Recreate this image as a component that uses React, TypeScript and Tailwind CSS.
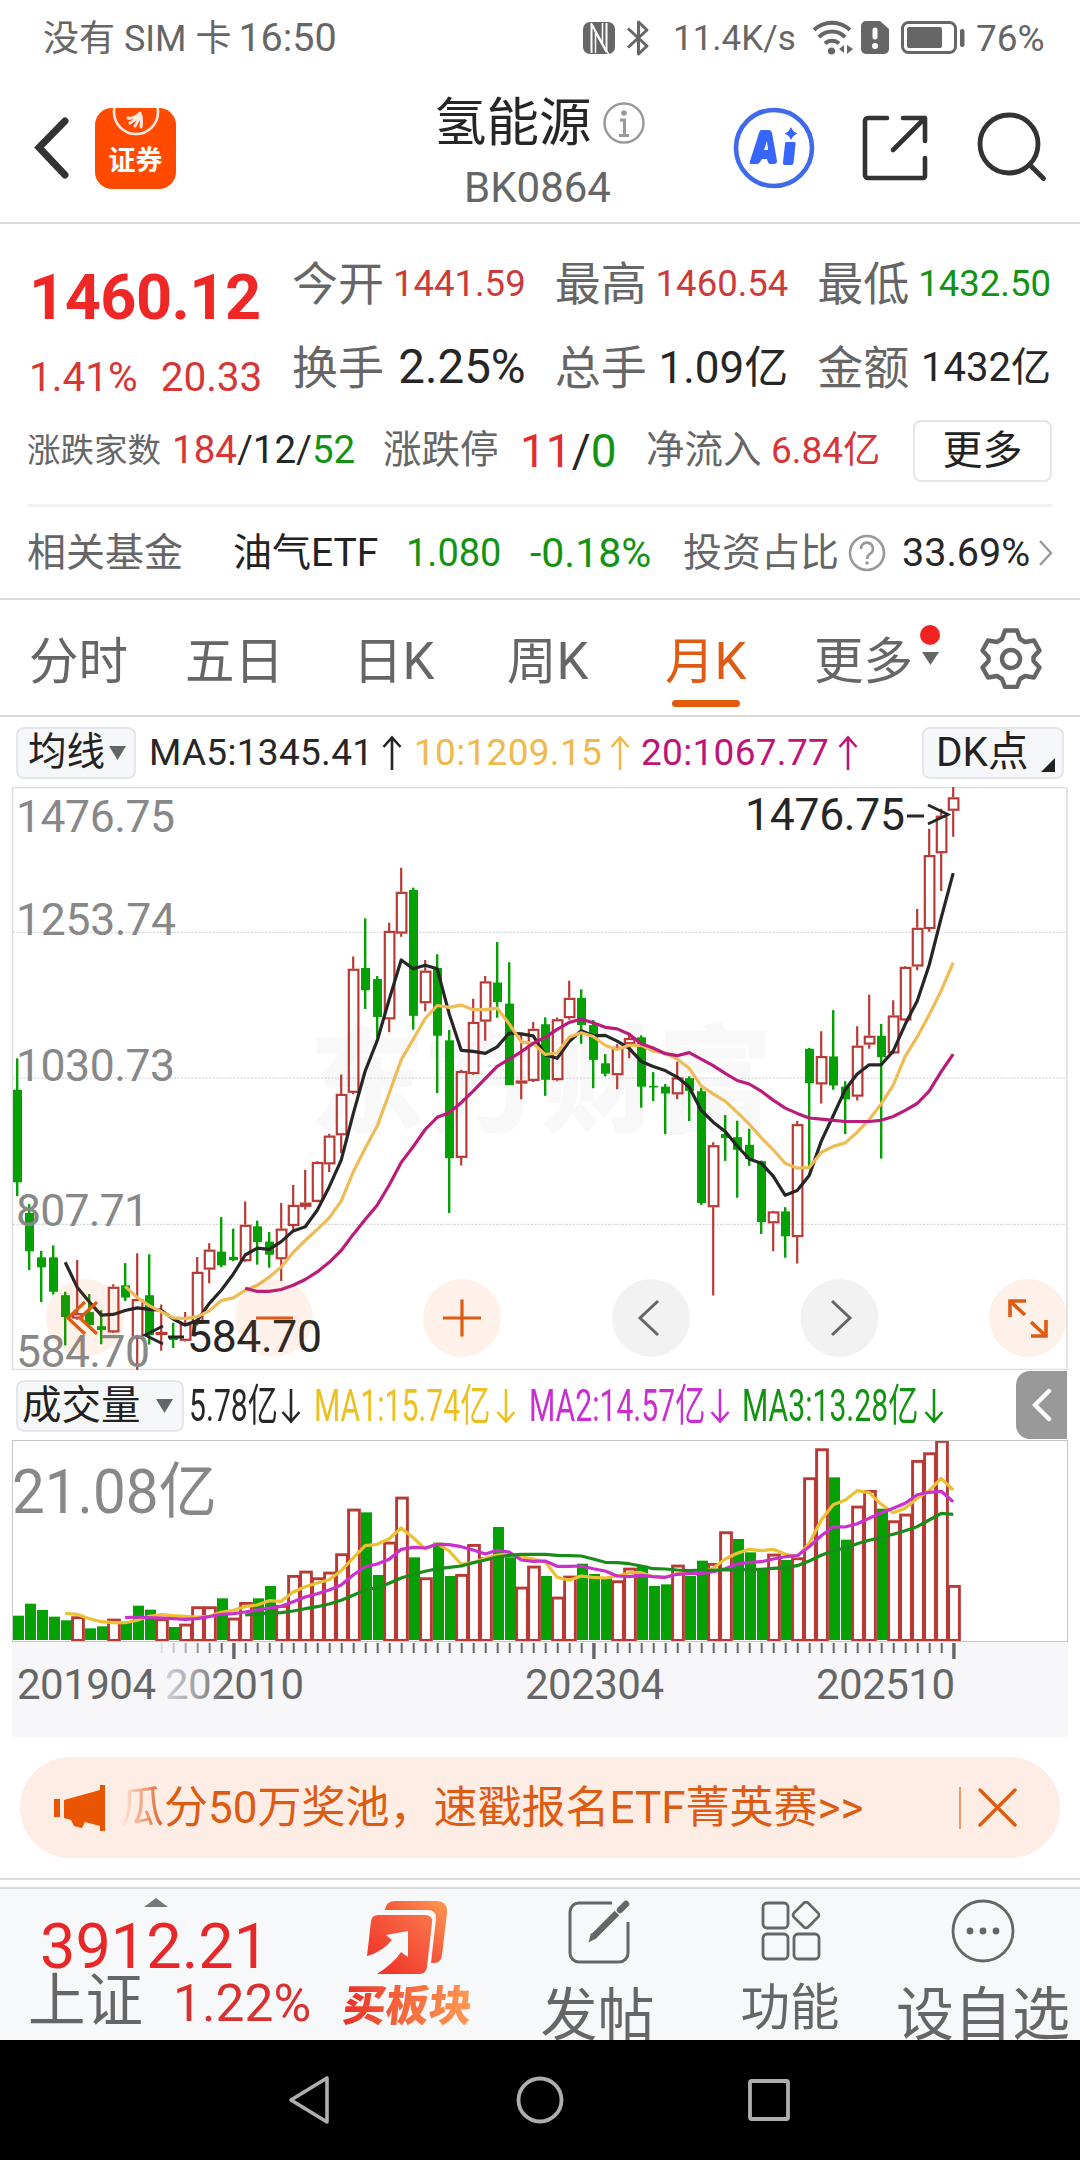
import type { ReactNode } from 'react';

type Candle = [high: number, top: number, bottom: number, low: number, up: 0 | 1];

// Price canvas units, one entry per month from 2019-04 to 2025-10
const CANDLES: Candle[] = [
  [727, 809, 1051, 1087, 0], [1108, 1131, 1231, 1280, 0], [1230, 1247, 1273, 1364, 0], [1216, 1247, 1337, 1344, 0],
  [1337, 1346, 1403, 1477, 0], [1254, 1393, 1407, 1410, 1], [1343, 1390, 1424, 1424, 0], [1385, 1427, 1437, 1474, 0],
  [1317, 1324, 1443, 1445, 1], [1262, 1320, 1352, 1361, 0], [1236, 1356, 1460, 1542, 1], [1239, 1346, 1450, 1475, 0],
  [1370, 1442, 1450, 1491, 1], [1418, 1455, 1463, 1484, 0], [1390, 1420, 1465, 1467, 1], [1246, 1285, 1421, 1425, 1],
  [1210, 1227, 1279, 1315, 1], [1142, 1232, 1268, 1273, 0], [1172, 1246, 1254, 1257, 0], [1101, 1162, 1257, 1259, 1],
  [1151, 1166, 1207, 1266, 0], [1181, 1206, 1240, 1274, 0], [1105, 1172, 1252, 1309, 1], [1058, 1110, 1165, 1178, 1],
  [1018, 1104, 1115, 1122, 1], [996, 998, 1102, 1103, 1], [924, 929, 1004, 1024, 1], [769, 820, 928, 975, 1],
  [461, 493, 817, 821, 1], [361, 491, 549, 598, 0], [512, 520, 619, 672, 0], [373, 394, 625, 659, 1],
  [229, 292, 401, 409, 1], [281, 287, 616, 652, 0], [470, 498, 583, 604, 1], [455, 491, 668, 818, 0],
  [653, 680, 988, 1131, 0], [757, 760, 987, 1007, 1], [571, 632, 768, 770, 1], [512, 526, 631, 681, 1],
  [423, 529, 580, 621, 0], [476, 584, 797, 797, 0], [664, 785, 793, 834, 1], [632, 650, 786, 789, 1],
  [620, 638, 783, 825, 0], [620, 625, 784, 787, 1], [524, 569, 622, 626, 1], [547, 569, 640, 689, 0],
  [627, 640, 731, 805, 0], [716, 740, 767, 774, 0], [690, 697, 771, 808, 1], [660, 674, 690, 727, 1],
  [667, 672, 801, 856, 0], [763, 799, 803, 839, 0], [794, 801, 819, 925, 0], [736, 777, 821, 834, 1],
  [774, 779, 812, 891, 0], [804, 813, 1105, 1110, 0], [946, 954, 1116, 1347, 1], [875, 925, 935, 995, 0],
  [890, 933, 966, 1091, 0], [911, 953, 990, 1008, 0], [994, 996, 1155, 1186, 0], [1125, 1127, 1158, 1231, 1],
  [1116, 1127, 1192, 1248, 0], [891, 899, 1194, 1263, 1], [700, 702, 792, 1012, 0], [656, 721, 795, 845, 1],
  [601, 722, 798, 809, 0], [787, 801, 834, 925, 0], [643, 694, 827, 837, 1], [561, 668, 691, 702, 1],
  [637, 668, 724, 989, 0], [575, 615, 714, 716, 1], [486, 488, 628, 630, 1], [337, 386, 487, 497, 1],
  [127, 196, 389, 396, 1], [75, 93, 191, 290, 1], [18, 45, 80, 148, 1],
];

const MA5 = [
  1260, 1325, 1363, 1398, 1396, 1386, 1379, 1383, 1385, 1408, 1424, 1412, 1368, 1333, 1291, 1241, 1223, 1226, 1206,
  1178, 1167, 1124, 1063, 993, 872, 760, 681, 573, 470, 493, 484, 493, 611, 706, 709, 714, 697, 661, 663, 668, 718,
  727, 683, 655, 668, 667, 682, 701, 735, 748, 759, 776, 802, 863, 894, 918, 956, 990, 1001, 1035, 1085, 1072, 1033,
  944, 877, 809, 768, 744, 744, 708, 638, 577, 483, 360, 243,
];
const MA10 = [
  1323, 1352, 1373, 1389, 1405, 1407, 1402, 1387, 1360, 1353, 1333, 1320, 1299, 1272, 1234, 1203, 1174, 1144, 1100,
  1024, 962, 904, 818, 731, 677, 623, 589, 594, 588, 600, 600, 596, 637, 684, 688, 717, 713, 672, 660, 670, 693, 704,
  693, 693, 708, 713, 729, 753, 799, 820, 839, 868, 899, 934, 966, 1001, 1014, 1012, 973, 957, 948, 920, 887, 846,
  797, 722, 671, 613, 550, 477,
];
const MA20 = [
  1328, 1336, 1336, 1331, 1320, 1305, 1285, 1260, 1229, 1187, 1148, 1111, 1058, 999, 958, 913, 881, 869, 843, 813,
  780, 748, 729, 710, 688, 672, 651, 633, 625, 634, 646, 650, 664, 689, 700, 715, 720, 712, 729, 746, 766, 785, 794,
  813, 836, 857, 871, 883, 886, 889, 892, 892, 892, 889, 879, 863, 845, 813, 762, 716,
];

// Volume canvas units: top edge of every bar, negative when the bar is green
const VOLUMES = [
  -767, -731, -750, -770, -781, 769, -805, -799, 776, -786, -737, -749, 775, -801, 791, 739, 739, -715, 773, 726,
  -715, -678, 735, 645, 632, 652, 635, 580, 446, -457, -645, 545, 410, -592, 652, -548, -648, 642, 552, 592, -501,
  -592, 680, 617, -648, 710, 647, -611, -642, -655, 661, 623, -617, -678, -673, 614, -648, -602, 609, 514, -537,
  -577, -625, 581, -600, 592, 352, 265, -352, -539, 437, 390, -446, 481, 461, 300, 277, 240, 675,
];
const VMA1 = [
  760, 763, 776, 785, 788, 788, 781, 769, 764, 767, 769, 771, 769, 757, 751, 740, 735, 722, 724, 696, 680, 669, 659,
  632, 594, 557, 553, 536, 504, 533, 567, 551, 573, 613, 608, 595, 585, 582, 590, 597, 606, 652, 661, 648, 652, 654,
  648, 638, 638, 650, 652, 641, 640, 640, 625, 597, 580, 568, 572, 568, 582, 590, 550, 480, 434, 420, 392, 398, 433,
  458, 445, 415, 392, 355, 390,
];
const VMA2 = [
  773, 771, 773, 774, 776, 778, 776, 770, 763, 761, 756, 750, 744, 739, 725, 711, 701, 690, 675, 645, 620, 612, 598,
  568, 562, 564, 553, 554, 560, 570, 582, 571, 576, 600, 604, 603, 619, 619, 618, 626, 633, 648, 650, 646, 650, 652,
  643, 641, 640, 635, 626, 612, 607, 605, 597, 590, 587, 560, 527, 500, 501, 491, 475, 458, 445, 430, 404, 397, 394,
  425,
];
const VMA3 = [
  765, 762, 759, 758, 753, 746, 740, 732, 721, 706, 690, 683, 670, 654, 643, 634, 626, 622, 618, 608, 600, 591, 586,
  583, 583, 583, 586, 587, 588, 597, 607, 608, 611, 618, 626, 627, 630, 632, 630, 631, 629, 630, 628, 628, 625, 623,
  617, 603, 586, 572, 564, 551, 541, 532, 523, 512, 500, 480, 460, 463,
];

const RED = '#b93a35';
const GREEN = '#04a004';

const px = (i: number) => 17.2 + 12 * i;
const py = (v: number) => (v - 18) / 2.613;
const vy = (v: number) => (v - 240) / 3;

function linePoints(data: number[], y: (v: number) => number) {
  const first = 79 - data.length;
  return data.map((v, i) => `${px(first + i)},${y(v).toFixed(1)}`).join(' ');
}

function StatusBar() {
  return (
    <div className="flex h-[75px] items-center pl-[43px] pt-px leading-none text-[#666]">
      <span className="w-[540px] whitespace-nowrap text-[36px]">没有 SIM 卡 <span className="-ml-0.5 text-[39.500px]">16:50</span></span>
      <svg width="32" height="34" viewBox="0 0 32 34" className="shrink-0">
        <rect y="1" width="32" height="32" rx="7" fill="#666" />
        <path d="M8.500 32V3L23.500 31V2" fill="none" stroke="#fff" strokeWidth="2" />
        <path d="M12.500 32V12l13 21M19.500 2v20L8 2" fill="none" stroke="#fff" strokeWidth="1.500" />
      </svg>
      <svg width="24" height="38" viewBox="0 0 24 38" className="ml-[11px] shrink-0" fill="none" stroke="#666" strokeWidth="3">
        <path d="M2 9.500L21 27l-8.500 8V3L21 11 2 28.500" strokeLinejoin="round" />
      </svg>
      <span className="ml-[23px] w-[141px] text-[35px]">11.4K/s</span>
      <svg width="42" height="36" viewBox="0 0 42 36" className="-ml-0.5 shrink-0">
        <g fill="none" stroke="#666" strokeWidth="4">
          <path d="M2 10a26 26 0 0 1 36 0" />
          <path d="M7 17a18 18 0 0 1 26 0" />
          <path d="M13 23.500a10 10 0 0 1 14 0" />
        </g>
        <circle cx="19.500" cy="31" r="3.600" fill="#666" />
        <path d="M32 25v8l-5-4zM35 25v9l6-5z" fill="#666" />
      </svg>
      <svg width="28" height="34" viewBox="0 0 28 34" className="ml-[7px] shrink-0">
        <path d="M5 0h14l9 8v20a5 5 0 0 1-5 5H5a5 5 0 0 1-5-5V5a5 5 0 0 1 5-5z" fill="#666" />
        <path d="M14 9v7" stroke="#fff" strokeWidth="5" strokeLinecap="round" />
        <circle cx="14" cy="25" r="3" fill="#fff" />
      </svg>
      <svg width="64" height="34" viewBox="0 0 64 34" className="ml-3 shrink-0">
        <rect x="1.500" y="1.500" width="53" height="30" rx="6" fill="none" stroke="#666" strokeWidth="3" />
        <rect x="6" y="6" width="35" height="21" rx="2" fill="#666" />
        <rect x="59" y="8" width="4.500" height="18" rx="2" fill="#666" />
      </svg>
      <span className="ml-[11px] text-[37px]">76%</span>
    </div>
  );
}

function Header() {
  return (
    <header className="flex h-[149px] items-start border-b-2 border-[#d8d9db]">
      <svg width="36" height="64" viewBox="0 0 36 64" className="ml-[33px] mt-[41px] shrink-0">
        <path d="M32 5L6 31.500 32 59" fill="none" stroke="#333" strokeWidth="7" strokeLinecap="round" />
      </svg>
      <div className="relative ml-[26px] mt-[33px] h-[81px] w-[81px] shrink-0 overflow-hidden rounded-[17px] bg-[#ff4a00]">
        <svg width="81" height="40" viewBox="0 0 81 40">
          <circle cx="41" cy="4" r="22" fill="none" stroke="#ffe9de" strokeWidth="2.600" />
          <g fill="none" stroke="#ffe9de" strokeWidth="3" strokeLinecap="round">
            <path d="M33 10q6 1 12-5M35 15q6-3 10-9M40 18q4-6 5-11M46 19q1-7 0-11" />
          </g>
        </svg>
        <div className="-mt-1 text-center text-[27px] font-bold leading-[34px] text-white">证券</div>
      </div>
      <div className="ml-[258px] mt-[17px] w-[260px]">
        <div className="flex items-center">
          <span className="text-[52.500px] leading-[62px] text-[#262626]">氢能源</span>
          <svg width="42" height="42" viewBox="0 0 42 42" className="ml-[11px]" fill="none" stroke="#999" strokeWidth="2.400">
            <circle cx="21" cy="21" r="19.500" />
            <path d="M17 18h4.500v15M16 33.500h10" strokeWidth="3" />
            <circle cx="21" cy="11" r="2.800" fill="#999" stroke="none" />
          </svg>
        </div>
        <div className="ml-[30px] text-[42px] leading-[68px] text-[#666]">BK0864</div>
      </div>
      <svg width="82" height="82" viewBox="0 0 82 82" className="ml-[39px] mt-[32px] shrink-0">
        <circle cx="41" cy="41" r="38" fill="none" stroke="#4069ec" strokeWidth="4.600" />
        <path
          fillRule="evenodd"
          d="M28 23h8q2 0 3 3l5 28q0 3-3 3h-4q-2 0-3-5h-5l-2 3q-1 2-3 2h-6q-2 0-1-3l9-28q1-3 2-3zM31 43h4l-1-9z"
          fill="#3766fb"
        />
        <path d="M53 35h8q2 0 1.500 2l-2 19q0 2-2.500 2h-6q-2.500 0-2-3l2-18q0-2 1-2zM58 20q2 5 6.500 6.500Q60 28 58 33q-2-5-6.500-6.500Q56 25 58 20z" fill="#3766fb" />
      </svg>
      <svg width="68" height="68" viewBox="0 0 68 68" className="ml-[46px] mt-[39px] shrink-0" fill="none" stroke="#333" strokeWidth="4.600" strokeLinecap="round" strokeLinejoin="round">
        <path d="M26 4H7a3 3 0 0 0-3 3v54a3 3 0 0 0 3 3h55a2 2 0 0 0 2-2V44" />
        <path d="M42 4h22v23M64 4L32 36" />
      </svg>
      <svg width="72" height="72" viewBox="0 0 72 72" className="ml-[48px] mt-[37px] shrink-0" fill="none" stroke="#333" strokeWidth="4.800">
        <circle cx="32" cy="32" r="29" />
        <path d="M53 53l13.500 13.500" strokeLinecap="round" />
      </svg>
    </header>
  );
}

function Stat({ label, children, className }: { label: string; children: ReactNode; className: string }) {
  return (
    <div className="flex items-center justify-between whitespace-nowrap">
      <span className="text-[46px] text-[#666]">{label}</span>
      <span className={className}>{children}</span>
    </div>
  );
}

function Quote() {
  return (
    <section className="h-[376px] border-b-2 border-[#d8d9db] leading-none">
      <div className="flex h-[181px] pl-[29px] pt-[18px]">
        <div className="w-[263px]">
          <div className="mt-[24px] text-[63px] font-bold tracking-[-0.500px] text-[#f02727]">1460.12</div>
          <div className="mt-[28px] flex gap-[23px] text-[40.500px] text-[#d63636]">
            <span>1.41%</span>
            <span>20.33</span>
          </div>
        </div>
        <div className="grid h-[168px] w-[759px] grid-cols-3 grid-rows-2 gap-x-[29px]">
          <Stat label="今开" className="text-[36.500px] text-[#cc3a3a]">1441.59</Stat>
          <Stat label="最高" className="text-[36.500px] text-[#cc3a3a]">1460.54</Stat>
          <Stat label="最低" className="text-[36.500px] text-[#129312]">1432.50</Stat>
          <Stat label="换手" className="text-[47.500px] text-[#262626]">2.25%</Stat>
          <Stat label="总手" className="text-[44px] text-[#262626]">1.09亿</Stat>
          <Stat label="金额" className="text-[40px] text-[#262626]">1432亿</Stat>
        </div>
      </div>
      <div className="mx-[27px] flex h-[102px] items-center whitespace-nowrap border-b-[3px] border-[#f3f3f5] pb-2 text-[#666]">
        <span className="w-[145px] text-[33.500px]">涨跌家数</span>
        <span className="w-[211px] text-[38.500px] text-[#262626]">
          <span className="text-[#d63636]">184</span>/12/<span className="text-[#129312]">52</span>
        </span>
        <span className="w-[137px] text-[38.500px]">涨跌停</span>
        <span className="w-[126px] text-[46px] text-[#262626]">
          <span className="text-[#e02d2d]">11</span>/<span className="text-[#129312]">0</span>
        </span>
        <span className="w-[125px] text-[38.500px]">净流入</span>
        <span className="w-[142px] text-[37px] text-[#d63636]">6.84亿</span>
        <button className="h-[62px] w-[139px] rounded-lg border-2 border-[#e6e6e8] text-[40px] leading-none text-[#222]">更多</button>
      </div>
      <div className="ml-[27px] flex h-[91px] items-center whitespace-nowrap pt-px text-[39px] text-[#666]">
        <span className="w-[206px]">相关基金</span>
        <span className="w-[173px] text-[#222]">油气ETF</span>
        <span className="w-[124px] text-[38px] text-[#129312]">1.080</span>
        <span className="w-[153px] text-[41px] text-[#129312]">-0.18%</span>
        <span className="w-[165px]">投资占比</span>
        <svg width="38" height="38" viewBox="0 0 38 38" fill="none" stroke="#999" strokeWidth="2.600">
          <circle cx="19" cy="19" r="17" />
          <path d="M13 15a6 6 0 1 1 9.500 4.500C20 21 19 22 19 25" />
          <circle cx="19" cy="29" r="1.800" fill="#999" stroke="none" />
        </svg>
        <span className="ml-[16px] w-[137px] text-[39.500px] text-[#262626]">33.69%</span>
        <svg width="14" height="28" viewBox="0 0 14 28" fill="none" stroke="#999" strokeWidth="2.400">
          <path d="M1 2l11 12L1 26" />
        </svg>
      </div>
    </section>
  );
}

function Tabs() {
  return (
    <nav className="flex h-[117px] items-start whitespace-nowrap border-b-2 border-[#d8d9db] pl-[29px] pt-[32px] text-[49.500px] leading-[60px] text-[#666]">
      <span className="w-[156px]">分时</span>
      <span className="w-[168px]">五日</span>
      <span className="w-[154px]">日<span className="text-[51px]">K</span></span>
      <span className="w-[158px]">周<span className="text-[51px]">K</span></span>
      <span className="w-[149px] text-[#dd5b12]">
        月<span className="text-[51px]">K</span>
        <span className="ml-[7px] mt-2 block h-[7px] w-[68px] rounded-full bg-[#e35a0c]" />
      </span>
      <span className="w-[104px]">更多</span>
      <svg width="24" height="46" viewBox="0 0 24 46" className="-mt-[7px]">
        <circle cx="12" cy="10" r="10" fill="#f02323" />
        <path d="M4 27h17l-8.500 13z" fill="#666" />
      </svg>
      <svg width="62" height="62" viewBox="0 0 62 62" className="ml-[38px] -mt-[5px]" fill="none" stroke="#666" strokeWidth="4.400" strokeLinejoin="round">
        <path d="M25 3.500h12l3 8.500 5 3 9-1.500 5.500 10-6 6.500v4l6 6.500-5.500 10-9-1.500-5 3-3 8H25l-3-8-5-3-9 1.500-5.500-10 6-6.500v-4l-6-6.500 5.500-10 9 1.500 5-3z" />
        <circle cx="31" cy="32" r="9" />
      </svg>
    </nav>
  );
}

function Arrow({ down = false }: { down?: boolean }) {
  return (
    <svg width="20" height="36" viewBox="0 0 20 36" className={down ? 'rotate-180' : ''} fill="none" stroke="currentColor" strokeWidth="2.600">
      <path d="M10 35V3M1.500 12L10 2.500 18.500 12" />
    </svg>
  );
}

function MaRow() {
  return (
    <div className="flex h-[70px] items-center whitespace-nowrap pl-[16px] pt-px text-[37px] leading-none tracking-[0.300px] text-[#262626]">
      <div className="flex h-[52px] w-[120px] items-center rounded-lg border-2 border-[#e4e6ec] bg-[#f6f7f9] pl-[10px] text-[38.500px] tracking-normal text-[#222]">
        均线
        <svg width="17" height="14" viewBox="0 0 17 14" className="ml-1">
          <path d="M0 0h17L8.500 14z" fill="#666" />
        </svg>
      </div>
      <span className="ml-[13px] w-[233px]">MA5:1345.41</span>
      <Arrow />
      <span className="ml-[12px] flex w-[227px] items-center text-[#efb94e]">
        <span className="w-[196px]">10:1209.15</span>
        <Arrow />
      </span>
      <span className="flex w-[281px] items-center text-[#bd1577]">
        <span className="w-[197px]">20:1067.77</span>
        <Arrow />
      </span>
      <div className="flex h-[52px] w-[142px] items-center rounded-lg border-2 border-[#e4e6ec] bg-[#f6f7f9] pl-[12px] text-[40.500px] tracking-normal text-[#222]">
        DK点
        <svg width="14" height="14" viewBox="0 0 14 14" className="ml-3 mt-6">
          <path d="M14 0v14H0z" fill="#222" />
        </svg>
      </div>
    </div>
  );
}

const AXIS = [
  { text: '1476.75', y: 44.5, w: 159 },
  { text: '1253.74', y: 147.5, w: 160 },
  { text: '1030.73', y: 293.5, w: 159 },
  { text: '807.71', y: 439, w: 133 },
  { text: '584.70', y: 580, w: 134 },
];

function PriceChart() {
  return (
    <svg width="1080" height="583" viewBox="0 0 1080 583" className="block font-[Roboto,'Noto_Sans_CJK_SC',sans-serif]">
      <text x="309" y="336" fontSize="116" fontWeight="900" fill="#f8f8f8" textLength="464">东方财富</text>
      <rect x="12.500" y="0.500" width="1054.500" height="582" fill="none" stroke="#dedede" strokeWidth="1.600" />
      {[398, 779, 1161].map((v) => (
        <path key={v} d={`M13 ${py(v).toFixed(1)}H1067`} stroke="#d6d6d6" strokeWidth="1.200" strokeDasharray="2 1.500" />
      ))}
      {CANDLES.map(([high, top, bottom, low, up], i) => {
        const x = px(i);
        if (!up) {
          return (
            <g key={i} fill={GREEN}>
              <rect x={x - 1.2} y={py(high)} width="2.400" height={py(low) - py(high)} />
              <rect x={x - 4.2} y={py(top)} width="9" height={py(bottom) - py(top)} />
            </g>
          );
        }
        return (
          <g key={i} stroke={RED} strokeWidth="2.200" fill="none">
            <path d={`M${x} ${py(high)}V${py(top)}M${x} ${py(bottom)}V${py(low)}`} />
            <rect x={x - 4.4} y={py(top) + 1} width="9.6" height={Math.max(py(bottom) - py(top) - 2, 1)} />
          </g>
        );
      })}
      <g fill="none" strokeWidth="3.200" strokeLinejoin="round">
        <polyline points={linePoints(MA5, py)} stroke="#262626" />
        <polyline points={linePoints(MA10, py)} stroke="#efbb55" />
        <polyline points={linePoints(MA20, py)} stroke="#b91c7b" />
      </g>
      <g fontSize="44.500" fill="#888">
        {AXIS.map((a) => (
          <text key={a.text} x="16" y={a.y} textLength={a.w}>{a.text}</text>
        ))}
      </g>
      <g fontSize="44.500" fill="#262626">
        <text x="187" y="564.500" textLength="135">584.70</text>
        <text x="745" y="42.500" textLength="160">1476.75</text>
        <path d="M163 539l-18 9 18 9M168 550h16M907 29h17M928 18l20 9.500-20 9.500" fill="none" stroke="#262626" strokeWidth="2.800" />
      </g>
      <g fill="#ee5a0c" fillOpacity="0.085">
        <circle cx="85" cy="531" r="39" />
        <circle cx="274" cy="531" r="39" />
        <circle cx="462" cy="531" r="39" />
        <path d="M1067 530.900a39 39 0 1 0 0 .2z" />
      </g>
      <g fill="#000" fillOpacity="0.05">
        <circle cx="651" cy="531" r="39" />
        <circle cx="839.500" cy="531" r="39" />
      </g>
      <g fill="none" stroke="#dd5b12" strokeWidth="3.200">
        <path d="M85 515L68 531l17 16M97 515L80 531l17 16M256 531h37M443 531h38M462 512.500v37" />
        <path d="M1026 514h-16v16M1010 514l15 14M1031 549h15v-16M1046 549l-15-14" strokeWidth="3.600" />
      </g>
      <path d="M658 514l-18 17 18 17M832 514l18 17-18 17" fill="none" stroke="#666" strokeWidth="3" />
    </svg>
  );
}

function VolumeLabel({ text }: { text: string }) {
  return <span className="inline-block origin-left scale-x-[0.685] text-[44px]">{text}</span>;
}

function VolumeRow() {
  return (
    <div className="flex h-[70px] items-center whitespace-nowrap pl-[16px] pt-0.5 leading-none text-[#262626]">
      <div className="flex h-[52px] w-[168px] shrink-0 items-center rounded-lg border-2 border-[#e4e6ec] bg-[#f6f7f9] pl-[4px] text-[39.500px] text-[#222]">
        成交量
        <svg width="17" height="14" viewBox="0 0 17 14" className="ml-[15px]">
          <path d="M0 0h17L8.500 14z" fill="#666" />
        </svg>
      </div>
      <span className="ml-[5px] w-[92px] shrink-0"><VolumeLabel text="5.78亿" /></span>
      <Arrow down />
      <span className="ml-[13px] w-[182px] shrink-0 text-[#edc01f]"><VolumeLabel text="MA1:15.74亿" /></span>
      <span className="text-[#edc01f]"><Arrow down /></span>
      <span className="ml-[13px] w-[181px] shrink-0 text-[#c92fd0]"><VolumeLabel text="MA2:14.57亿" /></span>
      <span className="text-[#c92fd0]"><Arrow down /></span>
      <span className="ml-[12px] w-[182px] shrink-0 text-[#129312]"><VolumeLabel text="MA3:13.28亿" /></span>
      <span className="text-[#129312]"><Arrow down /></span>
      <button className="-mt-0.5 ml-[72px] flex h-[68px] w-[51px] shrink-0 items-center justify-center rounded-l-[14px] bg-[#999]">
        <svg width="20" height="34" viewBox="0 0 20 34" fill="none" stroke="#fff" strokeWidth="4.400" strokeLinecap="round">
          <path d="M17 3L3 17l14 14" />
        </svg>
      </button>
    </div>
  );
}

const DATES = [
  { text: '201904', x: 17 },
  { text: '202304', x: 525 },
  { text: '202510', x: 816 },
];

function VolumeChart() {
  return (
    <svg width="1080" height="297" viewBox="0 0 1080 297" className="block font-[Roboto,'Noto_Sans_CJK_SC',sans-serif]">
      <defs>
        <linearGradient id="dateFade" gradientUnits="userSpaceOnUse" x1="160" x2="225" y1="0" y2="0">
          <stop offset="0" stopColor="#666" stopOpacity="0.2" />
          <stop offset="0.700" stopColor="#666" stopOpacity="0.7" />
          <stop offset="1" stopColor="#666" />
        </linearGradient>
        <clipPath id="volumeBox">
          <rect x="12" y="0" width="1056" height="202" />
        </clipPath>
      </defs>
      <rect x="12" y="202" width="1056" height="95" fill="#f7f7fa" />
      <text x="12" y="72.500" fontSize="61" fill="#888" textLength="205" lengthAdjust="spacingAndGlyphs">21.08亿</text>
      <g clipPath="url(#volumeBox)">
        {VOLUMES.map((v, i) => {
          const x = px(i) + 0.6;
          const top = vy(Math.abs(v));
          return v < 0 ? (
            <rect key={i} x={x - 4.8} y={top} width="11" height={200 - top} fill={GREEN} />
          ) : (
            <rect key={i} x={x - 5.2} y={top + 1.4} width="10.8" height={199 - top} fill="#fff" stroke={RED} strokeWidth="2.900" />
          );
        })}
        <g fill="none" strokeWidth="3.200" strokeLinejoin="round">
          <polyline points={linePoints(VMA1, vy)} stroke="#edc030" />
          <polyline points={linePoints(VMA2, vy)} stroke="#ca30cc" />
          <polyline points={linePoints(VMA3, vy)} stroke="#1a8c1a" />
        </g>
      </g>
      <rect x="12.500" y="0.500" width="1055" height="201" fill="none" stroke="#c6c6c6" />
      {VOLUMES.map((_, i) => {
        if (i < 12) return null;
        const major = i % 30 === 18;
        return (
          <rect key={i} x={px(i) - (major ? 1 : 0.5)} y="203" width={major ? 3.400 : 2} height={major ? 16 : 10} fill="#666" opacity={Math.min(1, (i - 11) * 0.17)} />
        );
      })}
      <g fontSize="42" fill="#666">
        {DATES.map((d) => (
          <text key={d.text} x={d.x} y="258.500" textLength="139">{d.text}</text>
        ))}
        <text x="165" y="258.500" textLength="139" fill="url(#dateFade)">202010</text>
      </g>
    </svg>
  );
}

function Banner() {
  return (
    <div className="mx-5 mt-5 flex h-[101px] items-center whitespace-nowrap rounded-full bg-[#fdede4] text-[44px] leading-none text-[#dd5b12]">
      <svg width="52" height="46" viewBox="0 0 52 46" className="ml-[34px] shrink-0">
        <path d="M0 14h6v18H0zM10 15L46 5V0h5v46h-5v-5l-15-4-3 6-8-2-3-6-7-2z" fill="#ea5504" />
      </svg>
      <span className="ml-[14px] w-[839px]">
        <span className="bg-linear-to-r from-[#fdede4] to-[#dd5b12] bg-clip-text text-transparent">瓜</span>
        分50万奖池，速戳报名ETF菁英赛&gt;&gt;
      </span>
      <span className="h-[42px] w-0.5 shrink-0 bg-[#ec9a6c]" />
      <svg width="40" height="40" viewBox="0 0 40 40" className="ml-[17px] shrink-0" fill="none" stroke="#dd5b12" strokeWidth="3.400" strokeLinecap="round">
        <path d="M2 2l35 35M37 2L2 37" />
      </svg>
    </div>
  );
}

function BottomBar() {
  return (
    <footer className="mt-[7px] flex h-[153px] overflow-hidden whitespace-nowrap border-t-2 border-[#d8d9db] bg-[#f7f8fa] leading-none text-[#666]">
      <div className="w-[343px] shrink-0">
        <svg width="24" height="9" viewBox="0 0 24 9" className="ml-[144px] mt-[9px]">
          <path d="M12 0l12 9H0z" fill="#777" />
        </svg>
        <div className="ml-[40px] mt-[8px] text-[63px] text-[#e82828]">3912.21</div>
        <div className="-mt-[5px] flex items-baseline pl-[28px]">
          <span className="w-[145px] text-[57.500px]">上证</span>
          <span className="text-[51.500px] text-[#d93030]">1.22%</span>
        </div>
      </div>
      <div className="w-[188px] shrink-0">
        <svg width="82" height="74" viewBox="0 0 82 74" className="ml-[24px] mt-[12px]">
          <defs>
            <linearGradient id="card" x1="0" y1="1" x2="1" y2="0">
              <stop offset="0" stopColor="#ec2426" />
              <stop offset="1" stopColor="#ff9a52" />
            </linearGradient>
            <linearGradient id="cardFront" x1="0" y1="1" x2="1" y2="0">
              <stop offset="0" stopColor="#ee2a26" />
              <stop offset="1" stopColor="#f9764a" />
            </linearGradient>
          </defs>
          <path d="M18 9q1-9 10-9h41q12 0 11 12l-5 42q-1 8-8 8h-3l5-44q1-9-9-9z" fill="url(#card)" />
          <path d="M4 20q1-6 7-6h47q8 0 7 8l-5 44q-1 7-7 7H10q17-11 24-22l7 5V30l-22 4 6 5Q15 51 0 55z" fill="url(#cardFront)" />
        </svg>
        <div className="mt-[10px] w-[134px] -skew-x-6 bg-linear-to-r from-[#e92a28] to-[#ff9d55] bg-clip-text text-[43px] font-black text-transparent">
          买板块
        </div>
      </div>
      <div className="w-[125px] shrink-0 text-center">
        <svg width="64" height="64" viewBox="0 0 64 64" className="ml-[36px] mt-[11px]" fill="none" stroke="#666" strokeWidth="3">
          <path d="M45 3H12a9 9 0 0 0-9 9v41a9 9 0 0 0 9 9h40a9 9 0 0 0 9-9V22" />
          <path d="M53 10l6-6" strokeWidth="6.500" strokeLinecap="round" />
          <path d="M27 36L50 13" strokeWidth="6.500" />
          <path d="M24 33l-2.500 9.500L30 38z" fill="#666" stroke="none" />
        </svg>
        <div className="ml-[8px] mt-[23px] text-[57px]">发帖</div>
      </div>
      <div className="ml-[64px] w-[140px] shrink-0 text-center">
        <svg width="60" height="60" viewBox="0 0 60 60" className="ml-[41px] mt-[12px]" fill="none" stroke="#666" strokeWidth="2.800">
          <rect x="2" y="2" width="25" height="25" rx="4" />
          <rect x="2" y="33" width="25" height="25" rx="4" />
          <rect x="33" y="33" width="25" height="25" rx="4" />
          <rect x="35" y="4" width="20" height="20" rx="3" transform="rotate(45 45 14)" />
        </svg>
        <div className="mt-[23px] text-[49.500px]">功能</div>
      </div>
      <div className="ml-[36px] w-[180px] shrink-0">
        <svg width="64" height="64" viewBox="0 0 64 64" className="ml-[55px] mt-[10px]" fill="none" stroke="#666" strokeWidth="2.800">
          <circle cx="32" cy="32" r="30" />
          <g fill="#666" stroke="none">
            <circle cx="19" cy="32" r="3.400" />
            <circle cx="32" cy="32" r="3.400" />
            <circle cx="45" cy="32" r="3.400" />
          </g>
        </svg>
        <div className="mt-[23px] text-[58px]">设自选</div>
      </div>
    </footer>
  );
}

function SystemNav() {
  return (
    <div className="flex h-[120px] items-center bg-black">
      <svg width="46" height="50" viewBox="0 0 46 50" className="ml-[287px]" fill="none" stroke="#aeaeae" strokeWidth="3.600" strokeLinejoin="round">
        <path d="M40 3v44L4 25z" />
      </svg>
      <svg width="48" height="48" viewBox="0 0 48 48" className="ml-[183px]" fill="none" stroke="#aeaeae" strokeWidth="3.800">
        <circle cx="24" cy="24" r="21.500" />
      </svg>
      <svg width="44" height="44" viewBox="0 0 44 44" className="ml-[183px]" fill="none" stroke="#aeaeae" strokeWidth="3.800">
        <rect x="3" y="3" width="38" height="38" rx="1.500" />
      </svg>
    </div>
  );
}

export default function App() {
  return (
    <div className="h-[2160px] w-[1080px] overflow-hidden bg-white font-[Roboto,'Noto_Sans_CJK_SC',sans-serif]">
      <StatusBar />
      <Header />
      <Quote />
      <Tabs />
      <MaRow />
      <PriceChart />
      <VolumeRow />
      <VolumeChart />
      <Banner />
      <div className="mt-5 h-0.5 bg-[#dcdde0]" />
      <BottomBar />
      <SystemNav />
    </div>
  );
}
